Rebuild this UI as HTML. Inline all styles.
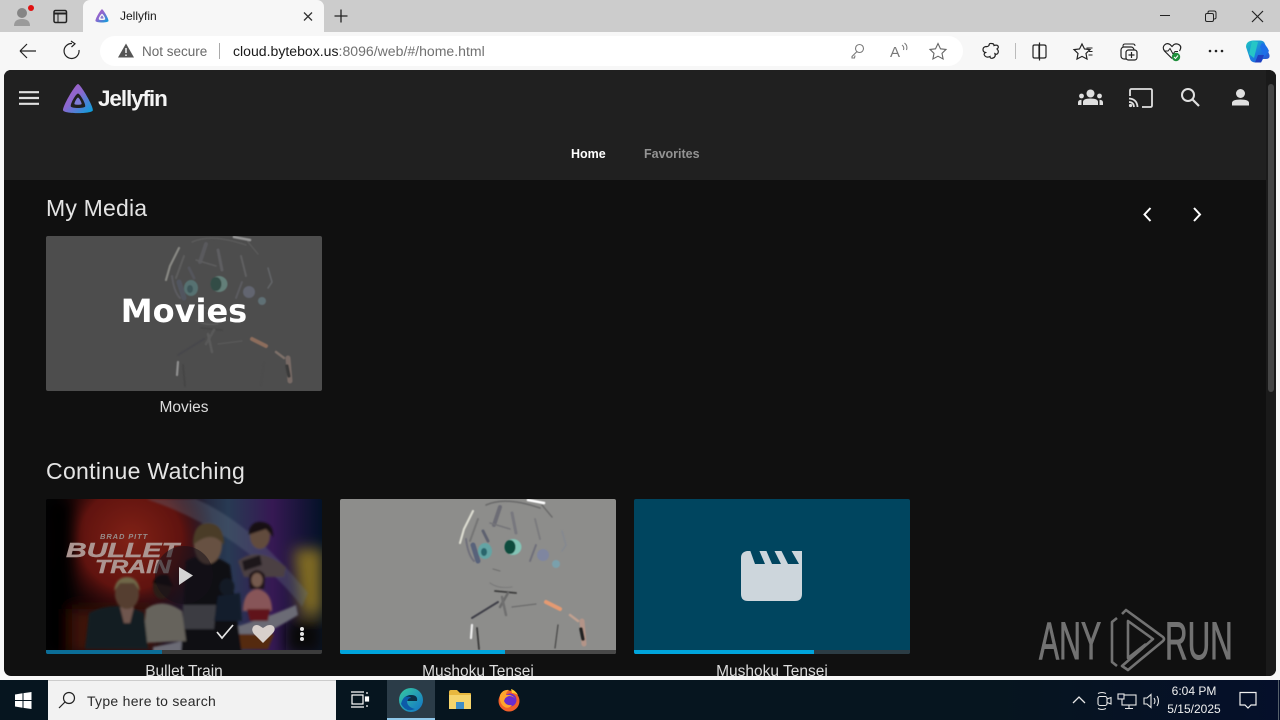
<!DOCTYPE html>
<html><head><meta charset="utf-8"><title>Jellyfin</title>
<style>
*{box-sizing:border-box;margin:0;padding:0}
html,body{width:1280px;height:720px;overflow:hidden;background:#f7f7f7;font-family:"Liberation Sans",sans-serif}
.a{position:absolute}
svg{position:absolute;overflow:visible}
.t{position:absolute;white-space:nowrap}
.card{position:absolute;width:276px;overflow:hidden;border-radius:2px}
.title{position:absolute;width:276px;text-align:center;color:#dcdcdc;font-size:15.5px;white-space:nowrap}
</style></head><body>
<svg width="0" height="0" style="position:absolute"><defs>
<filter id="soft"><feGaussianBlur stdDeviation=".55"/></filter>
<symbol id="art" viewBox="0 0 276 155" overflow="visible">
<g filter="url(#soft)">
<g fill="none" stroke-linecap="round">
<path d="M133 12 L124 30 L120 44" stroke="#dcdcd0" stroke-width="2.200"/>
<path d="M138 20 L130 42" stroke="#757575" stroke-width="2"/>
<path d="M146 6 Q165 -3 200 9" stroke="#6c6c6c" stroke-width="1.600"/>
<path d="M188 1 L204 4" stroke="#fff" stroke-width="2.600"/>
<path d="M202 6 L212 18" stroke="#6c6c6c" stroke-width="1.500"/>
<path d="M160 8 L154 26" stroke="#6c6c74" stroke-width="4"/>
<path d="M172 14 L176 34" stroke="#77777e" stroke-width="3"/>
<path d="M150 24 L170 30" stroke="#747478" stroke-width="1.500"/>
<path d="M195 20 L200 40" stroke="#7c7c7e" stroke-width="2"/>
<path d="M126 40 Q128 56 134 62" stroke="#70707a" stroke-width="2"/>
<path d="M133 46 L138 62" stroke="#58627a" stroke-width="5"/>
<path d="M143 32 L148 42" stroke="#5e6270" stroke-width="3"/>
<path d="M196 46 L190 62" stroke="#70707a" stroke-width="2"/>
<path d="M222 32 L226 46 L222 52" stroke="#848890" stroke-width="1.500"/>
<path d="M150 84 Q158 90 172 88" stroke="#7a7a7a" stroke-width="1.100"/>
<path d="M153 70 L160 72" stroke="#6c6c6c" stroke-width="1"/>
<path d="M155 92 L176 94" stroke="#3e3e3e" stroke-width="1.800"/>
<path d="M168 94 L160 108" stroke="#6a6a6a" stroke-width="2.500"/>
<path d="M132 119 L158 103" stroke="#404048" stroke-width="2"/>
<path d="M172 108 L196 105" stroke="#6c6c6c" stroke-width="1.200"/>
<path d="M162 98 L166 116" stroke="#707070" stroke-width="2.500"/>
<path d="M132 126 L131 139" stroke="#eee" stroke-width="2.200"/>
<path d="M137 129 L139 150" stroke="#3a3a3a" stroke-width="1.800"/>
<path d="M218 126 L215 149" stroke="#4a4a4a" stroke-width="1.300"/>
<path d="M206 103 L220 110" stroke="#e49a72" stroke-width="4"/>
<path d="M230 116 L238 122" stroke="#c0a090" stroke-width="2.500"/>
<path d="M242 122 L244 145" stroke="#b49488" stroke-width="5"/>
<path d="M241 130 L243 140" stroke="#222" stroke-width="3.500"/>
</g>
<ellipse cx="145" cy="52" rx="7" ry="8" fill="#63a4a4"/><ellipse cx="144" cy="53" rx="3" ry="4" fill="#2a656c"/>
<ellipse cx="173" cy="48" rx="8.500" ry="8" fill="#82c4b6"/><ellipse cx="170" cy="48" rx="5.500" ry="7" fill="#0d4c3e"/>
<ellipse cx="203" cy="56" rx="6" ry="6" fill="#7f86a0"/><ellipse cx="216" cy="65" rx="4" ry="4" fill="#7aa0ac"/>
</g>
</symbol>
<linearGradient id="lg" x1="0" y1="0" x2="1" y2="1"><stop offset="0" stop-color="#aa5cc3"/><stop offset=".45" stop-color="#8a68d0"/><stop offset="1" stop-color="#00a4dc"/></linearGradient>
<linearGradient id="cop" x1="0" y1="0" x2="1" y2="1"><stop offset="0" stop-color="#1ec8c0"/><stop offset=".55" stop-color="#1b7be0"/><stop offset="1" stop-color="#2d49c8"/></linearGradient>
<linearGradient id="edge" x1="0" y1="0" x2="1" y2="1"><stop offset="0" stop-color="#36c9a0"/><stop offset="1" stop-color="#1272c8"/></linearGradient>
</defs></svg>

<!-- tab strip -->
<div class="a" style="left:0;top:0;width:1280px;height:32px;background:#cccccc"></div>
<svg style="left:0;top:0" width="70" height="32">
<circle cx="22" cy="13" r="5" fill="#858585"/><path d="M14 26 Q14 19 22 19 Q30 19 30 26 Z" fill="#9a9a9a"/>
<circle cx="31" cy="8" r="3" fill="#e01010"/>
<rect x="54" y="10.500" width="12.500" height="12" rx="1.500" fill="none" stroke="#222" stroke-width="1.500"/><path d="M54 13.500H66.500" stroke="#222" stroke-width="2"/><path d="M58 13V22" stroke="#222" stroke-width="1"/>
</svg>
<div class="a" style="left:83px;top:0;width:241px;height:32px;background:#f7f7f7;border-radius:7px 7px 0 0"></div>
<svg style="left:94px;top:8px" width="16" height="16" viewBox="0 0 16 16">
<path d="M8 1.200 C6.800 1.200 1 11 1.500 13 C2 15 14 15 14.500 13 C15 11 9.200 1.200 8 1.200Z M8 5.800 C9 5.800 11.500 10.300 11.200 11.200 C10.800 12.200 5.200 12.200 4.800 11.200 C4.500 10.300 7 5.800 8 5.800Z" fill="url(#lg)" fill-rule="evenodd"/>
<path d="M8 7.500 C7.400 7.500 6.200 9.800 6.400 10.300 C6.600 10.800 9.400 10.800 9.600 10.300 C9.800 9.800 8.600 7.500 8 7.500Z" fill="#8a7dd0"/></svg>
<div class="t" style="left:120px;top:9px;font-size:12px;color:#1a1a1a">Jellyfin</div>
<svg style="left:300px;top:8px" width="50" height="16">
<path d="M4 4.500L12 12.500M12 4.500L4 12.500" stroke="#333" stroke-width="1.300"/>
<path d="M41 1.500V14.500M34.500 8H47.500" stroke="#222" stroke-width="1.300"/></svg>
<svg style="left:1150px;top:4px" width="125" height="24" fill="none" stroke="#222" stroke-width="1">
<path d="M10 11.500H20"/><rect x="55.500" y="9.500" width="8" height="8" rx="1.500"/><path d="M58 9.500V8.500Q58 7 59.500 7H64Q66 7 66 9V13.500Q66 15 64 15"/>
<path d="M102 7L113 18M113 7L102 18" stroke-width="1.200"/></svg>

<!-- toolbar -->
<div class="a" style="left:0;top:32px;width:1280px;height:38px;background:#f7f7f7"></div>
<div class="a" style="left:100px;top:36px;width:863px;height:30px;background:#fff;border-radius:15px"></div>
<svg style="left:16px;top:40px" width="70" height="22" fill="none" stroke="#222" stroke-width="1.200">
<path d="M4 11H20M4 11L11 4M4 11L11 18"/>
<path d="M63 10A7.500 7.500 0 1 1 56 3.500"/><path d="M55 1L59 3.800L55.500 7"/></svg>
<svg style="left:118px;top:43px" width="16" height="15"><path d="M8 .5L16 14.500H0Z" fill="#555"/><path d="M8 5V10M8 11.500V13" stroke="#fff" stroke-width="1.400"/></svg>
<div class="t" style="left:142px;top:44px;font-size:13.500px;color:#6a6a6a">Not secure</div>
<div class="a" style="left:219px;top:43px;width:1px;height:16px;background:#aaa"></div>
<div class="t" style="left:233px;top:43px;font-size:14.070px;color:#1a1a1a">cloud.bytebox.us<span style="color:#717171">:8096/web/#/home.html</span></div>
<svg style="left:846px;top:40px" width="105" height="22" fill="none" stroke="#7a7a7a" stroke-width="1.100">
<circle cx="13.500" cy="8.500" r="4"/><path d="M11 11.500L6 16.500V18H8.500L9 15.500"/>
<text x="44" y="17" font-size="15" fill="#777" stroke="none" font-family="Liberation Sans">A</text><path d="M56 5Q58.500 7 57.500 10M58.500 3Q62 6 60.500 10"/>
<path d="M92 3.500L94.500 8.800L100 9.400L96 13.300L97.100 19L92 16.200L86.900 19L88 13.300L84 9.400L89.500 8.800Z" stroke="#666" stroke-width="1.100"/></svg>
<svg style="left:980px;top:38px" width="290" height="26" fill="none" stroke="#222" stroke-width="1.200">
<path d="M9 7.500Q9 5 11.500 5.500Q14 5.500 14 7.500Q17 6.500 18 8T17 11Q19 13 18 15T15 15.800Q16 19 13 20T10 18.500Q7 20 5 18T5.500 14.500Q3 14 3 11.500T6 8.500Q7.500 9 9 7.500Z"/>
<path d="M35.500 5V21" stroke="#bbb" stroke-width="1"/>
<path d="M59 7V20M59 7H54.500Q53 7 53 8.500V18.500Q53 20 54.500 20H59M60 7H64Q66 7 66 8.500V18.500Q66 20 64 20H60M59.500 4.500V22.500"/>
<path d="M102 6L104.500 11L110 11.600L106 15.500L107 21L102 18.400L97 21L98 15.500L94 11.600L99.500 11Z"/><path d="M106.500 10H112.500M109 13.500H112.500M108.500 17H112.500" stroke-width="1"/>
<path d="M143 9V8Q143 6 145 6H153Q155 6 155 8" stroke-width="1"/><rect x="141" y="9" width="13" height="12" rx="3"/><rect x="146" y="12" width="11" height="10" rx="2.500" fill="#f7f7f7"/><path d="M151.500 14V20M148.500 17H154.500"/>
<path d="M192 20.500L184.500 13Q182 9.500 184.500 7T190 6.500L192 8.500L194 6.500Q197 5 199.500 7T199.500 13"/><path d="M184 13H188L190 10.500L193 16L195 13.500H198" stroke-width="1"/>
<circle cx="196" cy="19" r="4.200" fill="#1f8f3c" stroke="none"/><path d="M194 19L195.500 20.500L198 17.500" stroke="#fff" stroke-width="1"/>
<circle cx="230" cy="13" r="1.300" fill="#222" stroke="none"/><circle cx="236" cy="13" r="1.300" fill="#222" stroke="none"/><circle cx="242" cy="13" r="1.300" fill="#222" stroke="none"/>
</svg>
<svg style="left:1245px;top:38px" width="26" height="26"><path d="M8 2.500H15Q19 2.500 20 6L24.500 17Q25 21 21 21H18L16 24.500H10Q6 24 5 21L1 9Q1 3 8 2.500Z" fill="url(#cop)"/><path d="M7 3L13 4L9 20L4 16Z" fill="#26c6c6"/><path d="M17 5Q21 6 24 13L19 19Q17 13 15 9Z" fill="#1d6fe8"/><path d="M10 24.500L13 17H19L16 24.500Z" fill="#1f3fc0"/></svg>

<!-- app -->
<div class="a" style="left:4px;top:70px;width:1272px;height:606px;background:#101010;border-radius:7px;overflow:hidden">
 <div class="a" style="left:0;top:0;width:1272px;height:110px;background:#202020"></div>
 <div class="a" style="left:1262px;top:0;width:10px;height:606px;background:#1a1a1a"></div>
 <div class="a" style="left:1264px;top:14px;width:6px;height:308px;background:#454545;border-radius:3px"></div>
</div>

<!-- header -->
<svg style="left:19px;top:91px" width="21" height="14"><path d="M0 1.200H20M0 7H20M0 12.800H20" stroke="#e0e0e0" stroke-width="2.200"/></svg>
<svg style="left:62px;top:83px" width="32" height="32" viewBox="0 0 32 32">
<path d="M16 1 C13.500 1 0 24 1.200 27.500 C2.400 31 29.600 31 30.800 27.500 C32 24 18.500 1 16 1Z M16 10.500 C18 10.500 24 21 23.200 23.500 C22.400 25.500 9.600 25.500 8.800 23.500 C8 21 14 10.500 16 10.500Z" fill="url(#lg)" fill-rule="evenodd"/>
<path d="M16 14.500 C15 14.500 12 20 12.400 21 C12.800 22 19.200 22 19.600 21 C20 20 17 14.500 16 14.500Z" fill="#7f7cd6"/></svg>
<div class="t" style="left:98px;top:86px;font-size:22.500px;font-weight:700;color:#f4f4f4;letter-spacing:-1.100px">Jellyfin</div>
<svg style="left:1076px;top:84px" width="180" height="28" fill="#e0e0e0">
<circle cx="14.500" cy="9.500" r="4"/><path d="M7 21V18Q7 14.500 14.500 14.500T22 18V21Z"/><circle cx="5.500" cy="12" r="2.400"/><circle cx="23.500" cy="12" r="2.400"/><path d="M2 21V18.500Q2 16 5.500 15.800 5.500 17 5.500 21ZM27 21V18.500Q27 16 23.500 15.800 23.500 17 23.500 21Z"/>
<path d="M54 12V6.500Q54 5 55.500 5H74.500Q76 5 76 6.500V21.500Q76 23 74.500 23H66" fill="none" stroke="#e0e0e0" stroke-width="1.800"/>
<path d="M53 14.500Q61 15 61.500 23M53 18Q57.500 18 58 23" fill="none" stroke="#e0e0e0" stroke-width="1.800"/><circle cx="54.500" cy="21.500" r="1.600"/>
<circle cx="112" cy="11" r="6" fill="none" stroke="#e0e0e0" stroke-width="2"/><path d="M116.500 15.500L123 22" stroke="#e0e0e0" stroke-width="2.200"/>
<circle cx="164.500" cy="9.500" r="4.500"/><path d="M156 21.500V19Q156 15.500 164.500 15.500T173 19V21.500Z"/></svg>
<div class="t" style="left:571px;top:147px;font-size:12.500px;font-weight:700;color:#fff">Home</div>
<div class="t" style="left:644px;top:147px;font-size:12.500px;font-weight:700;color:#939393">Favorites</div>

<!-- my media -->
<div class="t" style="left:46px;top:195px;font-size:23px;color:#e4e4e4;letter-spacing:.2px">My Media</div>
<svg style="left:1140px;top:205px" width="66" height="18" fill="none" stroke="#fff" stroke-width="2"><path d="M10.500 3L4.500 9.500L10.500 16M54 3L60 9.500L54 16"/></svg>

<div class="card" style="left:46px;top:236px;height:155px;background:#4d4d4d">
 <svg width="276" height="155" style="left:0;top:0;opacity:.42"><use href="#art" width="276" height="155"/></svg>
 <div class="t" style="left:0;width:276px;text-align:center;top:56px;font-family:'DejaVu Sans',sans-serif;font-size:32px;font-weight:700;color:#fff">Movies</div>
</div>
<div class="title" style="left:46px;top:399px">Movies</div>

<!-- continue watching -->
<div class="t" style="left:46px;top:458px;font-size:23px;color:#e4e4e4;letter-spacing:.33px">Continue Watching</div>

<div class="card" style="left:46px;top:499px;height:155px;background:#0c0c0c">
<svg width="276" height="155" viewBox="0 0 276 155" style="left:0;top:0">
<defs>
<radialGradient id="r1" gradientUnits="userSpaceOnUse" cx="85" cy="40" r="85"><stop offset="0" stop-color="#b83020"/><stop offset=".6" stop-color="#8a1c16"/><stop offset="1" stop-color="#3a0a0a" stop-opacity="0"/></radialGradient>
<linearGradient id="r2" x1="0" y1="0" x2="1" y2="0"><stop offset="0" stop-color="#040508"/><stop offset=".15" stop-color="#1a0608"/><stop offset=".5" stop-color="#30223c"/><stop offset=".66" stop-color="#3a5478"/><stop offset=".82" stop-color="#4e2478"/><stop offset="1" stop-color="#061a38"/></linearGradient>
<filter id="b"><feGaussianBlur stdDeviation="1.100"/></filter><filter id="b2"><feGaussianBlur stdDeviation="7"/></filter>
</defs>
<rect width="276" height="155" fill="url(#r2)"/>
<rect width="276" height="155" fill="url(#r1)"/>
<g filter="url(#b2)">
<path d="M248 50H276V115H255Z" fill="#b89a30"/>
<path d="M0 110H110V155H0Z" fill="#5a1c10"/>
<path d="M240 120H276V155H240Z" fill="#0a0a08"/>
<path d="M0 0H26V155H0Z" fill="#020306"/>
</g>
<g filter="url(#b)">
<path d="M100 0 Q190 30 250 100 L256 108 L262 94 Q205 24 150 0Z" fill="#8a9ab4" opacity=".35"/>
<path d="M107 148 Q190 132 250 106 L252 116 Q205 145 165 155H107Z" fill="#9a9aa8"/>
<path d="M181 135H228L222 150H172Z" fill="#7a3e18"/>
<path d="M135 155 L140 62 Q162 50 184 66 L196 155Z" fill="#15151d"/>
<ellipse cx="162" cy="46" rx="14" ry="19" fill="#94745f"/><path d="M147 46Q147 24 162 24Q178 24 178 46Q166 30 147 46Z" fill="#6a5638"/>
<path d="M137 106H170L168 130H137Z" fill="#56565e"/>
<ellipse cx="214" cy="37" rx="10" ry="13" fill="#8c6c58"/><path d="M202 36Q204 22 215 23Q228 24 227 38L220 30Z" fill="#20161a"/>
<path d="M192 62Q212 46 240 68 L238 78 H198Z" fill="#6c5c60"/><path d="M196 62L214 56L216 66L198 72Z" fill="#2a2228"/>
<ellipse cx="211" cy="80" rx="7" ry="9" fill="#a07a68"/><path d="M203 76Q211 66 219 76L218 90H204Z" fill="#2e1c20"/><ellipse cx="211" cy="81" rx="5.500" ry="7" fill="#a88270"/>
<path d="M197 112Q197 92 211 90Q226 92 226 112Z" fill="#c27a7e"/><path d="M201 110H224L222 122H204Z" fill="#8a1c28"/>
<path d="M172 97L194 94L196 122H168Z" fill="#1a2a40"/><ellipse cx="181" cy="88" rx="7.500" ry="8.500" fill="#1c2636"/>
<path d="M97 144L100 110Q116 98 136 112L140 142Z" fill="#938e84"/><ellipse cx="116" cy="88" rx="9" ry="12" fill="#3c2a24"/><path d="M107 84Q110 74 122 76L127 88Z" fill="#120e0c"/>
<path d="M39 150 L43 114 Q70 100 98 114 L102 150Z" fill="#1e2c30"/><path d="M74 108H88L84 124H78Z" fill="#a07c70"/>
<ellipse cx="81" cy="95" rx="12" ry="15" fill="#7a5a44"/><path d="M68 92Q70 78 81 78T94 92L88 84H74Z" fill="#a09468"/>
</g>
<text x="54" y="40" font-size="7.500" font-weight="700" font-style="italic" fill="#d8c8c4" font-family="Liberation Sans" letter-spacing=".9">BRAD PITT</text>
<text x="20" y="58" font-size="20" font-weight="700" font-style="italic" fill="#f6d6d0" stroke="#f6d6d0" stroke-width=".4" font-family="Liberation Sans" textLength="113" lengthAdjust="spacingAndGlyphs">BULLET</text>
<text x="49" y="74" font-size="18" font-weight="700" font-style="italic" fill="#f6d6d0" stroke="#f6d6d0" stroke-width=".4" font-family="Liberation Sans" textLength="76" lengthAdjust="spacingAndGlyphs">TRAIN</text>
<rect width="276" height="155" fill="#000" opacity=".3"/>
<circle cx="138" cy="76" r="29" fill="#15101a" opacity=".55"/>
<path d="M133 68L147 76.500L133 86Z" fill="#d4d4d4"/>
<path d="M171 133L176 139L187 126" fill="none" stroke="#e4e4e4" stroke-width="1.700"/>
<path d="M217 144L208 135Q205 131 207 128T213 126.500L217 129L221 126.500Q226 125 228 128T226 135Z" fill="#d8d0cc"/>
<circle cx="256" cy="130" r="2" fill="#e4e4e4"/><circle cx="256" cy="135" r="2" fill="#e4e4e4"/><circle cx="256" cy="140" r="2" fill="#e4e4e4"/>
<rect y="151" width="276" height="4" fill="#3c3c3c"/><rect y="151" width="116" height="4" fill="#0b6d97"/>
</svg>
</div>
<div class="title" style="left:46px;top:663px;height:13px;overflow:hidden;line-height:18px">Bullet Train</div>

<div class="card" style="left:340px;top:499px;height:155px;background:#8d8d8b">
 <svg width="276" height="155" style="left:0;top:0"><use href="#art" width="276" height="155"/></svg>
 <div class="a" style="left:0;top:151px;width:276px;height:4px;background:#484848"></div><div class="a" style="left:0;top:151px;width:165px;height:4px;background:#00a4dc"></div>
</div>
<div class="title" style="left:340px;top:663px;height:13px;overflow:hidden;line-height:18px">Mushoku Tensei</div>

<div class="card" style="left:634px;top:499px;height:155px;background:#00455f">
 <svg width="64" height="52" style="left:105px;top:51px" viewBox="0 0 64 52"><path d="M8 1H63V44Q63 51 56 51H9Q2 51 2 44V8Q2 2 8 1Z" fill="#cdd6dc"/><path d="M11 0H20L26 14H16ZM27 0H35L42 14H33ZM42 0H52L60 14H49Z" fill="#00455f"/></svg>
 <div class="a" style="left:0;top:151px;width:276px;height:4px;background:#2c3c44"></div><div class="a" style="left:0;top:151px;width:180px;height:4px;background:#00a4dc"></div>
</div>
<div class="title" style="left:634px;top:663px;height:13px;overflow:hidden;line-height:18px">Mushoku Tensei</div>

<!-- watermark -->
<div class="t" style="left:1039px;top:612px;font-size:53px;line-height:60px;color:#727272;transform:scaleX(.57);transform-origin:0 0;-webkit-text-stroke:1px #727272">ANY</div>
<div class="t" style="left:1165px;top:612px;font-size:53px;line-height:60px;color:#727272;transform:scaleX(.59);transform-origin:0 0;-webkit-text-stroke:1px #727272">RUN</div>
<svg style="left:1108px;top:608px" width="60" height="66" fill="none" stroke="#727272" stroke-width="2.600" stroke-linejoin="round">
<path d="M9 10L4 14V54L9 58"/><path d="M14 6L18 2L55 29Q57 31 55 33L20 62L14 58L45 31L20 13V50L38 36"/></svg>

<!-- taskbar -->
<div class="a" style="left:0;top:680px;width:1280px;height:40px;background:#06151f"></div>
<div class="a" style="left:1000px;top:680px;width:280px;height:40px;background:linear-gradient(90deg,#06151f,#050f2a)"></div>
<svg style="left:15px;top:692px" width="17" height="17" fill="#fff"><path d="M0 2.500L7.500 1.300V8H0ZM8.500 1.100L16.500 0V8H8.500ZM0 9H7.500V15.700L0 14.500ZM8.500 9H16.500V17L8.500 15.900Z"/></svg>
<div class="a" style="left:48px;top:680px;width:288px;height:40px;background:#f2f2f2;border-top:1px solid #ccc"></div>
<svg style="left:58px;top:691px" width="18" height="18" fill="none" stroke="#222" stroke-width="1.200"><circle cx="11" cy="7" r="5.500"/><path d="M7 11L1 17"/></svg>
<div class="t" style="left:87px;top:693px;font-size:14px;color:#2a2a2a;letter-spacing:.28px">Type here to search</div>
<svg style="left:350px;top:691px" width="20" height="18" fill="none" stroke="#fff" stroke-width="1.200"><rect x="2" y="4" width="11" height="9"/><path d="M1 1H14M1 16H14M17 1V3M17 14V16"/><rect x="15.500" y="6" width="3" height="4" fill="#fff"/></svg>
<div class="a" style="left:387px;top:680px;width:48px;height:40px;background:#2b3c48;border-bottom:2px solid #8fc8ea"></div>
<svg style="left:398px;top:687px" width="26" height="26"><circle cx="13" cy="13" r="12" fill="url(#edge)"/><path d="M3 17Q5 8 13 8Q20 8 19 14H9Q9 20 17 22Q8 26 3 17Z" fill="#0c5aa8"/><path d="M9.500 14H19Q20 8 13 8Q10 8 8 10Q12 9 13 11Q10 11 9.500 14Z" fill="#0c2a3a" opacity=".9"/></svg>
<svg style="left:448px;top:689px" width="24" height="22"><path d="M1 3Q1 1 3 1H9L12 4H22Q23 4 23 5V20H1Z" fill="#e8b83e"/><rect x="1" y="6" width="22" height="14" fill="#f6d56c"/><rect x="8" y="13" width="8" height="7" fill="#3f8ec8"/></svg>
<svg style="left:497px;top:688px" width="24" height="24"><circle cx="12" cy="13" r="10.500" fill="#f2602a"/><circle cx="13" cy="12" r="6.500" fill="#6a2ccf"/><path d="M3 7Q6 1 12 2Q9 4 9 7Q16 6 19 12Q17 8 12 8Q8 9 7 13Q9 18 15 17Q11 22 6 18Q2 14 3 7Z" fill="#ffa52c"/><path d="M14 1Q18 2 21 7Q18 5 15 5Z" fill="#ffcb30"/></svg>
<svg style="left:1070px;top:690px" width="92" height="20" fill="none" stroke="#e8e8e8" stroke-width="1.100">
<path d="M3 13L9 7L15 13" stroke-width="1.300"/>
<rect x="28" y="6.500" width="9" height="9" rx="2"/><path d="M37 9L41 7.500V14L37 12.500"/><path d="M28 3.500Q32 1.500 36 3.500M28 18.500Q32 20.500 36 18.500"/>
<rect x="52" y="5" width="14" height="10"/><rect x="48" y="4" width="6" height="5" fill="#06112a"/><path d="M59 15V18M55 18.500H63"/>
<path d="M74 8H77L81 4.500V17.500L77 14H74ZM84 8Q86 11 84 14M87 6Q90 11 87 16"/></svg>
<div class="t" style="left:1160px;top:683px;width:68px;text-align:center;font-size:12px;line-height:17.500px;color:#f0f0f0">6:04 PM<br>5/15/2025</div>
<svg style="left:1238px;top:690px" width="20" height="20" fill="none" stroke="#f0f0f0" stroke-width="1.200"><path d="M2 2.500H18V15H13L10 18L7 15H2Z"/></svg>
<div class="a" style="left:1278px;top:680px;width:1px;height:40px;background:#56606a"></div>
</body></html>
